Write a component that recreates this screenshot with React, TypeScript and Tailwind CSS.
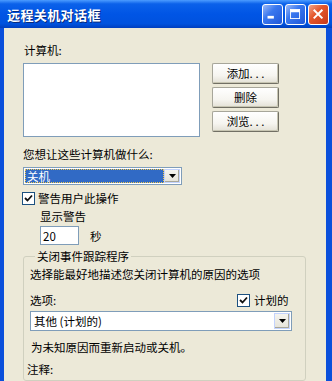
import React from "react";

const xpFont = "font-['Noto_Sans_CJK_SC',sans-serif]";

function CaptionButton({ kind }: { kind: "min" | "max" | "close" }) {
  const face =
    kind === "close"
      ? "bg-[linear-gradient(135deg,#F2A58A_0%,#E4572C_40%,#C8391A_100%)]"
      : "bg-[linear-gradient(135deg,#9DBAF7_0%,#3A78EF_40%,#1F57D8_100%)]";

  return (
    <div
      className={`flex h-[21px] w-[21px] items-center justify-center rounded-[3px] border border-white ${face}`}
    >
      <svg width="21" height="21" viewBox="0 0 21 21">
        {kind === "min" && <rect x="5" y="12" width="7" height="3" fill="#fff" />}
        {kind === "max" && (
          <>
            <rect x="5" y="5" width="10" height="10" fill="none" stroke="#fff" strokeWidth="1" />
            <rect x="5" y="5" width="10" height="3" fill="#fff" />
          </>
        )}
        {kind === "close" && (
          <path d="M6 6 L14 14 M14 6 L6 14" stroke="#fff" strokeWidth="2.2" strokeLinecap="square" />
        )}
      </svg>
    </div>
  );
}

function XpButton({ label }: { label: string }) {
  return (
    <div className="flex h-[21px] w-[67px] items-center justify-center rounded-[2px] border border-[#A7A69A] border-b-[#716F64] border-r-[#716F64] bg-[linear-gradient(180deg,#FFFFFF_0%,#F6F5F0_60%,#E3E1D6_100%)] text-[11.5px] leading-none text-black shadow-[inset_-1px_-1px_0_#C7C5B2]">
      {label}
    </div>
  );
}

function DropArrow() {
  return (
    <div className="flex h-full w-[16px] items-center justify-center border border-[#C3D3FD] bg-[linear-gradient(180deg,#F5F4EF_0%,#E5E3D9_100%)] shadow-[inset_-1px_-1px_0_#A9A799]">
      <svg width="7" height="4" viewBox="0 0 7 4">
        <path d="M0 0 H7 L3.5 4 Z" fill="#000" />
      </svg>
    </div>
  );
}

function CheckBox() {
  return (
    <div className="flex h-[13px] w-[13px] items-center justify-center border border-[#1C5180] bg-white">
      <svg width="9" height="9" viewBox="0 0 9 9">
        <path d="M1 4 L3.5 6.5 L8 1.5" fill="none" stroke="#111" strokeWidth="1.8" />
      </svg>
    </div>
  );
}

export default function App() {
  return (
    <div className={`flex h-[381px] w-[332px] flex-col overflow-hidden bg-[#0A4FDB] ${xpFont}`}>
      <div className="flex h-[28px] shrink-0 items-center justify-between bg-[linear-gradient(180deg,#4C9CFF_0%,#0B61EA_14%,#0055E5_50%,#0052DE_85%,#003FBE_100%)] pl-[7px] pr-[3px]">
        <span className="text-[13px] font-bold leading-none tracking-[0.4px] text-white [text-shadow:1px_1px_0_#0A2A7A]">
          远程关机对话框
        </span>
        <div className="flex gap-[2px]">
          <CaptionButton kind="min" />
          <CaptionButton kind="max" />
          <CaptionButton kind="close" />
        </div>
      </div>

      <div className="flex min-h-0 flex-1 pl-[4px] pr-[6px]">
        <div className="flex flex-1 flex-col bg-[#ECE9D8] pl-[19px] text-[11.5px] leading-[14px] text-black">
          <div className="mt-[15px] h-[14px] pl-[1px]">计算机:</div>

          <div className="mt-[6px] flex gap-[12px]">
            <div className="h-[74px] w-[177px] border border-[#7F9DB9] bg-white" />
            <div className="flex flex-col gap-[3px]">
              <XpButton label="添加. . ." />
              <XpButton label="删除" />
              <XpButton label="浏览. . ." />
            </div>
          </div>

          <div className="mt-[10px] h-[14px]">您想让这些计算机做什么:</div>

          <div className="mt-[6px] flex h-[20px] w-[159px] items-center border border-[#7F9DB9] bg-white p-[1px]">
            <div className="flex h-full flex-1 items-center bg-[#316AC5] pl-[2px] text-white outline-1 outline-dotted outline-[#F2C94C] -outline-offset-1">
              关机
            </div>
            <DropArrow />
          </div>

          <div className="mt-[6px] flex h-[14px] items-center gap-[3px] ml-[-1px]">
            <CheckBox />
            <span>警告用户此操作</span>
          </div>

          <div className="mt-[4px] h-[14px] pl-[17px]">显示警告</div>

          <div className="mt-[3px] flex h-[19px] items-center gap-[11px] pl-[17px]">
            <div className="flex h-[19px] w-[39px] items-center border border-[#7F9DB9] bg-white pl-[2px]">20</div>
            <span>秒</span>
          </div>

          <fieldset className="mt-[4px] h-[200px] w-[283px] rounded-[3px] border border-[#D0D0BF] pl-[6px]">
            <legend className="ml-[5px] px-[2px] leading-[14px]">关闭事件跟踪程序</legend>

            <div className="mt-[4px] h-[14px]">选择能最好地描述您关闭计算机的原因的选项</div>

            <div className="mt-[12px] flex h-[14px] items-center">
              <span className="w-[207px]">选项:</span>
              <CheckBox />
              <span className="ml-[4px]">计划的</span>
            </div>

            <div className="mt-[4px] flex h-[20px] w-[262px] items-center border border-[#7F9DB9] bg-white p-[1px]">
              <div className="flex-1 pl-[2px]">其他 (计划的)</div>
              <DropArrow />
            </div>

            <div className="mt-[9px] h-[14px] pl-[1px]">为未知原因而重新启动或关机。</div>

            <div className="mt-[8px] h-[14px] ml-[-3px]">注释:</div>
          </fieldset>
        </div>
      </div>
    </div>
  );
}
